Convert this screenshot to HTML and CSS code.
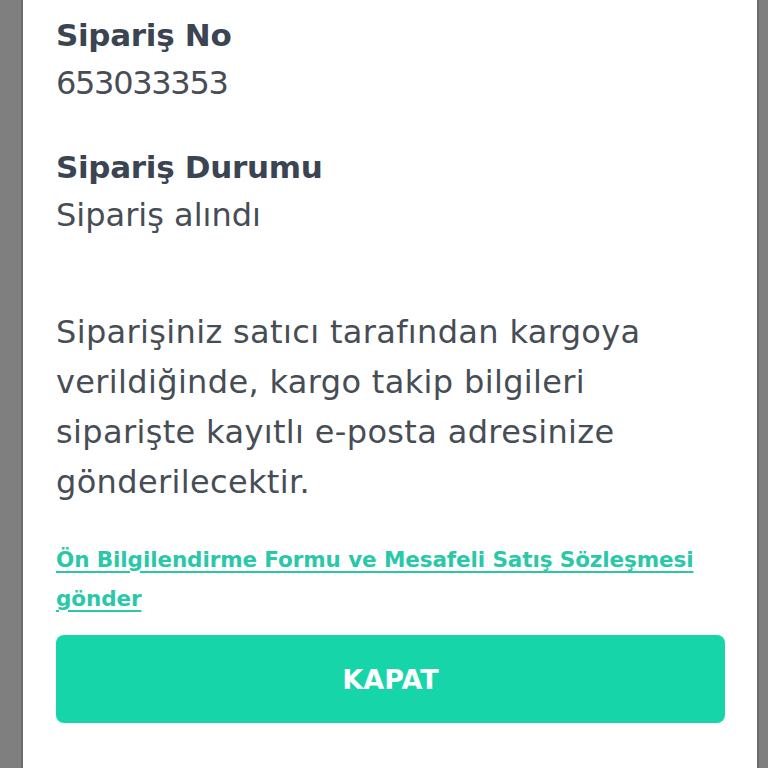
FILE: index.html
```html
<!DOCTYPE html>
<html lang="tr">
<head>
    <meta charset="UTF-8">
    <meta name="viewport" content="width=device-width, initial-scale=1.0">
    <title>Sipariş Detayı</title>
    <link rel="stylesheet" href="styles.css">
</head>
<body>

<div class="modal">
    <div class="info">
        <h3>Sipariş No</h3>
        <p class="order-no">653033353</p>
    </div>
    <div class="info">
        <h3>Sipariş Durumu</h3>
        <p>Sipariş alındı</p>
    </div>

    <p class="note">Siparişiniz satıcı tarafından kargoya verildiğinde, kargo takip bilgileri siparişte kayıtlı e-posta adresinize gönderilecektir.</p>

    <a class="send-link" href="#">Ön Bilgilendirme Formu ve Mesafeli Satış Sözleşmesi gönder</a>

    <button class="close-btn">KAPAT</button>
</div>

</body>
</html>
```

FILE: styles.css
```css
body {
    font-family: "DejaVu Sans", Verdana, sans-serif;
    margin: 0;
    padding: 0;
    background-color: #7f7f7f;
}
.modal {
    margin: 0 11px 0 23px;
    min-height: 768px;
    box-sizing: border-box;
    padding: 11px 32px 0 33px;
    background-color: #fff;
    box-shadow: -2px 0 0 #6b6b6b, 2px 0 0 #6b6b6b;
}
.info {
    margin-bottom: 36px;
}
.info h3 {
    margin: 0;
    font-size: 31px;
    letter-spacing: -0.3px;
    line-height: 48px;
    font-weight: 700;
    color: #3b4452;
}
.info p {
    margin: 0;
    font-size: 32px;
    line-height: 48px;
    color: #474d56;
}
.info .order-no {
    letter-spacing: -1.3px;
}
.note {
    margin: 68px 0 0 0;
    font-size: 32px;
    letter-spacing: 0.35px;
    line-height: 50px;
    color: #474d56;
}
.send-link {
    display: block;
    margin-top: 33px;
    font-size: 21.5px;
    letter-spacing: -0.1px;
    line-height: 39px;
    font-weight: 700;
    color: #2ac8a8;
    text-decoration: underline;
    text-decoration-thickness: 2px;
    text-underline-offset: 4px;
}
.close-btn {
    display: block;
    width: 100%;
    height: 88px;
    margin-top: 17px;
    border: none;
    border-radius: 8px;
    background-color: #16d6a9;
    color: #fff;
    font-family: inherit;
    font-size: 27px;
    font-weight: 700;
    cursor: pointer;
}
```
